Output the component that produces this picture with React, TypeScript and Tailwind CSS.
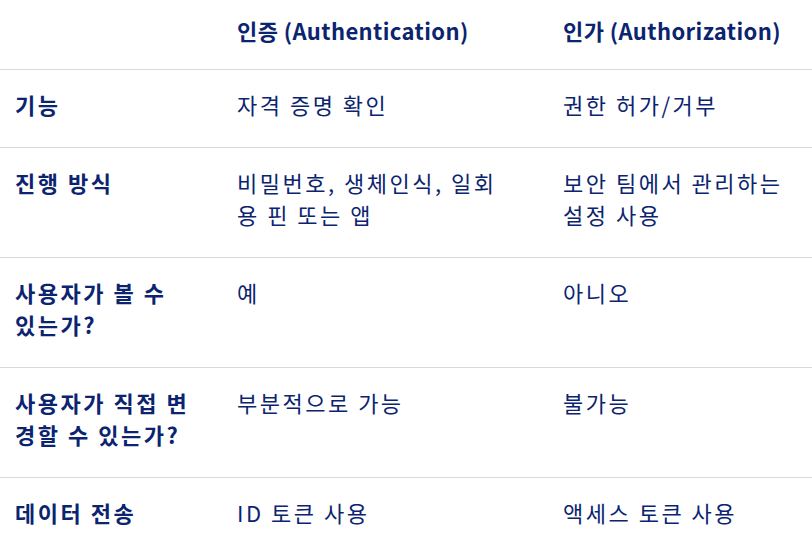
import React from 'react';

type Row = { label: string; authn: string; authz: string };

const rows: Row[] = [
    { label: '기능', authn: '자격 증명 확인', authz: '권한 허가/거부' },
    { label: '진행 방식', authn: '비밀번호, 생체인식, 일회용 핀 또는 앱', authz: '보안 팀에서 관리하는 설정 사용' },
    { label: '사용자가 볼 수 있는가?', authn: '예', authz: '아니오' },
    { label: '사용자가 직접 변경할 수 있는가?', authn: '부분적으로 가능', authz: '불가능' },
    { label: '데이터 전송', authn: 'ID 토큰 사용', authz: '액세스 토큰 사용' },
];

export default function App() {
    return (
        <div
            className="w-[812px] h-[553px] overflow-hidden bg-white text-[#0b2470] text-[22px] leading-[32px]"
            style={{ fontFamily: '"Noto Sans CJK KR", sans-serif' }}
        >
            {/* 헤더 */}
            <div className="grid grid-cols-[237px_326px_1fr] border-b border-[#d9d9d9] h-[70px] pt-[14px] tracking-[0.4px]">
                <div></div>
                <div className="font-bold">인증 (Authentication)</div>
                <div className="font-bold">인가 (Authorization)</div>
            </div>

            {rows.map((row) => (
                <div
                    key={row.label}
                    className="grid grid-cols-[237px_326px_1fr] border-b border-[#d9d9d9] pt-[18px] pb-[27px] tracking-[2.5px]"
                >
                    <div className="pl-[15px] pr-[43px] font-bold">{row.label}</div>
                    <div className="pr-[50px]">{row.authn}</div>
                    <div className="pr-[12px]">{row.authz}</div>
                </div>
            ))}
        </div>
    );
}
